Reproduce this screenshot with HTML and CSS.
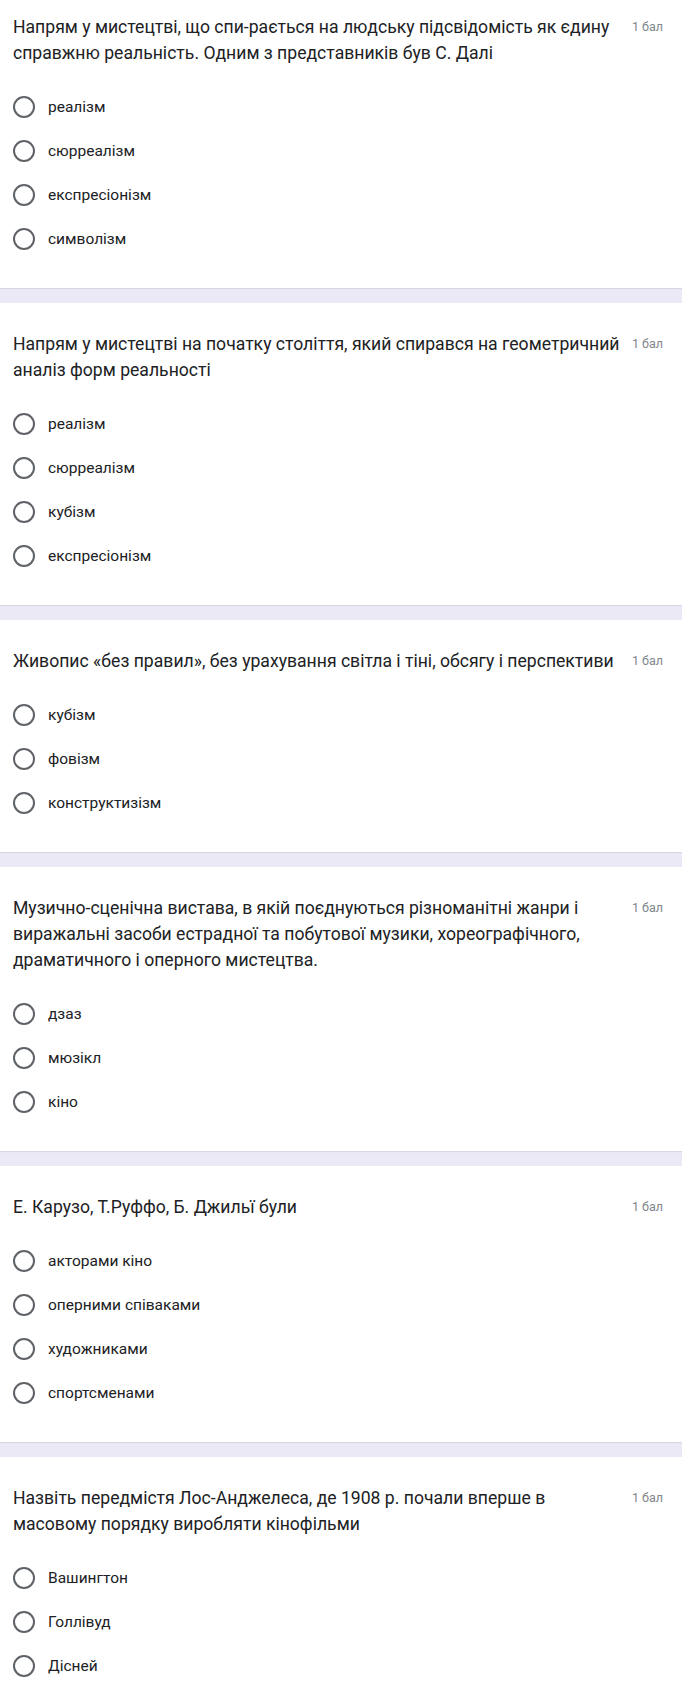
FILE: index.html
```html
<!DOCTYPE html>
<html lang="uk">
<head>
    <meta charset="UTF-8">
    <meta name="viewport" content="width=device-width, initial-scale=1.0">
    <title>Тест</title>
    <link rel="stylesheet" href="styles.css">
</head>
<body>
    <div class="form">
        <div class="card first">
            <div class="q-head">
                <div class="q-title">Напрям у мистецтві, що спи-рається на людську підсвідомість як єдину справжню реальність. Одним з представників був С. Далі</div>
                <span class="points">1 бал</span>
            </div>
            <div class="options">
                <label class="option"><span class="radio"></span><span>реалізм</span></label>
                <label class="option"><span class="radio"></span><span>сюрреалізм</span></label>
                <label class="option"><span class="radio"></span><span>експресіонізм</span></label>
                <label class="option"><span class="radio"></span><span>символізм</span></label>
            </div>
        </div>

        <div class="card">
            <div class="q-head">
                <div class="q-title">Напрям у мистецтві на початку століття, який спирався на геометричний аналіз форм реальності</div>
                <span class="points">1 бал</span>
            </div>
            <div class="options">
                <label class="option"><span class="radio"></span><span>реалізм</span></label>
                <label class="option"><span class="radio"></span><span>сюрреалізм</span></label>
                <label class="option"><span class="radio"></span><span>кубізм</span></label>
                <label class="option"><span class="radio"></span><span>експресіонізм</span></label>
            </div>
        </div>

        <div class="card">
            <div class="q-head">
                <div class="q-title">Живопис «без правил», без урахування світла і тіні, обсягу і перспективи</div>
                <span class="points">1 бал</span>
            </div>
            <div class="options">
                <label class="option"><span class="radio"></span><span>кубізм</span></label>
                <label class="option"><span class="radio"></span><span>фовізм</span></label>
                <label class="option"><span class="radio"></span><span>конструктизізм</span></label>
            </div>
        </div>

        <div class="card">
            <div class="q-head">
                <div class="q-title">Музично-сценічна вистава, в якій поєднуються різноманітні жанри і виражальні засоби естрадної та побутової музики, хореографічного, драматичного і оперного мистецтва.</div>
                <span class="points">1 бал</span>
            </div>
            <div class="options">
                <label class="option"><span class="radio"></span><span>дзаз</span></label>
                <label class="option"><span class="radio"></span><span>мюзікл</span></label>
                <label class="option"><span class="radio"></span><span>кіно</span></label>
            </div>
        </div>

        <div class="card">
            <div class="q-head">
                <div class="q-title">Е. Карузо, Т.Руффо, Б. Джильї були</div>
                <span class="points">1 бал</span>
            </div>
            <div class="options">
                <label class="option"><span class="radio"></span><span>акторами кіно</span></label>
                <label class="option"><span class="radio"></span><span>оперними співаками</span></label>
                <label class="option"><span class="radio"></span><span>художниками</span></label>
                <label class="option"><span class="radio"></span><span>спортсменами</span></label>
            </div>
        </div>

        <div class="card">
            <div class="q-head">
                <div class="q-title">Назвіть передмістя Лос-Анджелеса, де 1908 р. почали вперше в масовому порядку виробляти кінофільми</div>
                <span class="points">1 бал</span>
            </div>
            <div class="options">
                <label class="option"><span class="radio"></span><span>Вашингтон</span></label>
                <label class="option"><span class="radio"></span><span>Голлівуд</span></label>
                <label class="option"><span class="radio"></span><span>Дісней</span></label>
            </div>
        </div>
    </div>
</body>
</html>
```

FILE: styles.css
```css
/* Google Forms style quiz */
:root {
    --bg: #ece9f7;
    --text: #202124;
    --muted: #80868b;
    --radio: #5f6368;
}

body {
    font-family: Roboto, "Noto Sans", sans-serif;
    margin: 0;
    padding: 0;
    background-color: var(--bg);
    color: var(--text);
}

.form {
    display: flex;
    flex-direction: column;
    gap: 15px;
}

.card {
    background: white;
    padding: 28px 19px 27px 13px;
    box-shadow: 0 1px 1px rgba(0, 0, 0, 0.08);
}

.card.first {
    padding-top: 14px;
}

.q-head {
    display: flex;
    align-items: flex-start;
    gap: 2px;
}

.q-title {
    flex: 1;
    font-size: 17.6px;
    line-height: 26px;
}

.points {
    font-size: 12.5px;
    line-height: 26px;
    color: var(--muted);
    white-space: nowrap;
}

.options {
    display: flex;
    flex-direction: column;
    margin-top: 19px;
}

.option {
    display: flex;
    align-items: center;
    gap: 13px;
    height: 44px;
    font-size: 15.5px;
    cursor: pointer;
}

.radio {
    box-sizing: border-box;
    width: 22px;
    height: 22px;
    border: 2px solid var(--radio);
    border-radius: 50%;
}
```
